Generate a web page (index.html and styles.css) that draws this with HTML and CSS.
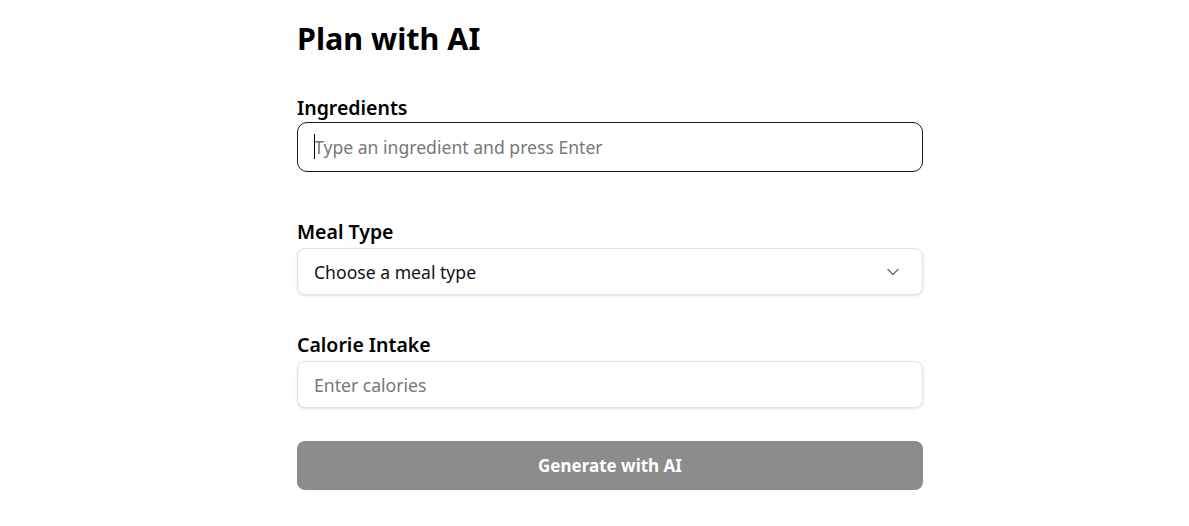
FILE: index.html
```html
<!DOCTYPE html>
<html lang="en">
<head>
<meta charset="utf-8">
<title>Plan with AI</title>
<link rel="stylesheet" href="styles.css">
</head>
<body>
<main class="page">
  <h1 class="title">Plan with AI</h1>
  <form class="form">
    <div class="field field-ingredients">
      <label class="label" for="ing">Ingredients</label>
      <div class="box box-focus">
        <span class="caret"></span>
        <input id="ing" class="input" type="text" placeholder="Type an ingredient and press Enter">
      </div>
    </div>
    <div class="field">
      <label class="label" for="meal">Meal Type</label>
      <div class="box box-select">
        <span class="select-text">Choose a meal type</span>
        <svg class="chevron" width="12" height="8" viewBox="0 0 12 8" aria-hidden="true"><path d="M1 1.5 L6 6.5 L11 1.5" fill="none" stroke="#707070" stroke-width="1.5" stroke-linecap="round" stroke-linejoin="round"/></svg>
      </div>
    </div>
    <div class="field">
      <label class="label" for="cal">Calorie Intake</label>
      <div class="box">
        <input id="cal" class="input" type="text" placeholder="Enter calories">
      </div>
    </div>
    <button type="button" class="btn">Generate with AI</button>
  </form>
</main>
</body>
</html>
```
FILE: styles.css
```css
* { box-sizing: border-box; }
html, body { margin: 0; padding: 0; background: #ffffff; }
body {
  font-family: "Noto Sans", "Open Sans", "Liberation Sans", sans-serif;
  color: #000;
}
.page {
  width: 626px;
  margin-left: 297px;
  padding-top: 18px;
}
.title {
  margin: 0;
  font-size: 30.5px;
  line-height: 40px;
  font-weight: 700;
}
.form {
  display: flex;
  flex-direction: column;
  margin-top: 36px;
}
.field { display: flex; flex-direction: column; }
.field-ingredients { margin-bottom: 46px; }
.label {
  font-size: 19.5px;
  line-height: 28px;
  font-weight: 600;
}
.field + .field .label { margin-bottom: 2px; }
.box {
  position: relative;
  display: flex;
  align-items: center;
  height: 47px;
  padding: 0 16px;
  border: 1px solid #e3e3e3;
  border-radius: 8px;
  background: #fff;
  box-shadow: 0 1px 3px rgba(0,0,0,0.12);
  margin-bottom: 36px;
}
.box-focus {
  height: 50px;
  border: 1.5px solid #1a1a1a;
  border-radius: 10px;
  box-shadow: none;
  margin-bottom: 0;
}
.input {
  flex: 1;
  border: 0;
  outline: none;
  padding: 0;
  font: inherit;
  font-size: 17.6px;
  color: #000;
  background: transparent;
}
.input::placeholder { color: #777; }
.caret {
  position: absolute;
  left: 16px;
  top: 11px;
  width: 1px;
  height: 25px;
  background: #000;
}
.box-select { justify-content: space-between; }
.select-text { font-size: 17.6px; color: #111; }
.chevron { margin-right: 7px; }
.btn {
  height: 49px;
  border: 0;
  border-radius: 8px;
  background: #8c8c8c;
  color: #fff;
  font: inherit;
  font-size: 17px;
  font-weight: 700;
  margin-top: -3px;
}
```
